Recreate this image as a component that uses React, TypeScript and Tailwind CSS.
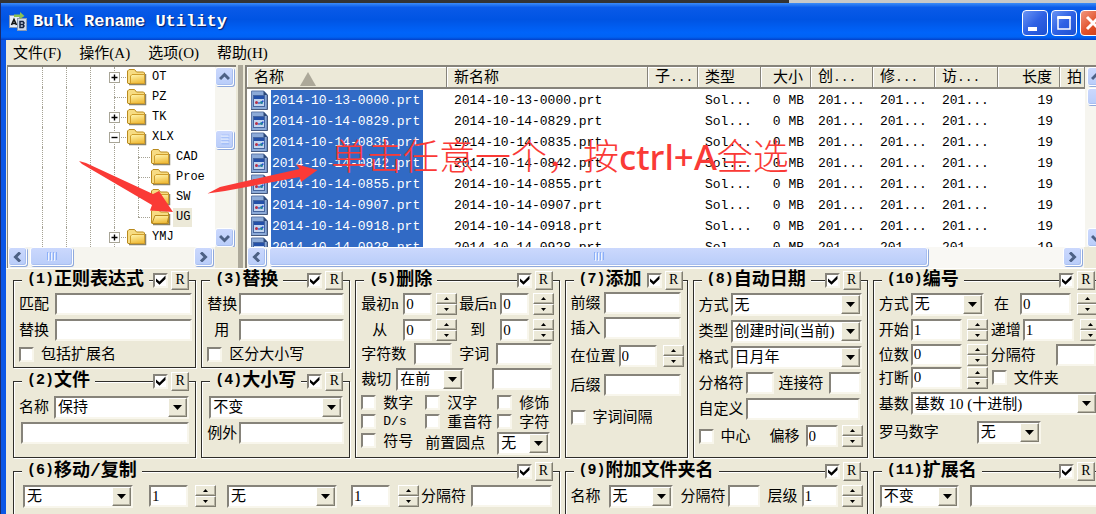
import type { ReactNode } from 'react';

const sunken =
  'h-[22px] min-w-0 rounded-none border-2 border-t-[#86837a] border-l-[#86837a] border-r-[#f8f6ec] border-b-[#f8f6ec] bg-white text-[15px] text-black outline-none';

const raised =
  'bg-[#ece9d8] border border-t-white border-l-white border-r-[#807d70] border-b-[#807d70] shadow-[inset_-1px_-1px_0_#b5b2a2]';

function Text({ label, w = 'w-[38px]' }: { label: string; w?: string }) {
  return (
    <input type="text" aria-label={label} className={`${sunken} ${w}`} />
  );
}

function Num({ label, value, w }: { label: string; value: string; w: string }) {
  return <input type="text" aria-label={label} defaultValue={value} className={`${sunken} ${w} shrink-0 pl-px`} />;
}

function Spin() {
  return (
    <span className="flex h-[22px] w-[21px] shrink-0 flex-col">
      <button type="button" aria-label="增加" className={`${raised} flex flex-1 items-center justify-center`}>
        <svg width="5" height="3" viewBox="0 0 5 3"><path d="M2.500 0L5 3H0z" /></svg>
      </button>
      <button type="button" aria-label="减少" className={`${raised} flex flex-1 items-center justify-center`}>
        <svg width="5" height="3" viewBox="0 0 5 3"><path d="M0 0H5L2.500 3z" /></svg>
      </button>
    </span>
  );
}

function Pick({ label, value, w }: { label: string; value: string; w: string }) {
  return (
    <span className={`relative block h-[23px] ${w}`}>
      <select
        aria-label={label}
        className="h-full w-full appearance-none rounded-none border-2 border-t-[#86837a] border-l-[#86837a] border-r-[#f8f6ec] border-b-[#f8f6ec] bg-white pr-[20px] pl-[2px] text-[15px] leading-[18px] text-black outline-none"
      >
        <option>{value}</option>
      </select>
      <span className={`${raised} pointer-events-none absolute top-[2px] right-[2px] bottom-[2px] flex w-[19px] items-center justify-center`}>
        <svg width="9" height="5" viewBox="0 0 9 5"><path d="M0 0H9L4.500 5z" /></svg>
      </span>
    </span>
  );
}

function Tick({ label, on }: { label: string; on?: boolean }) {
  return (
    <span className="relative block h-[15px] w-[15px] shrink-0">
      <input
        type="checkbox"
        aria-label={label}
        defaultChecked={on}
        className="block h-full w-full appearance-none border-2 border-t-[#86837a] border-l-[#86837a] border-r-[#f8f6ec] border-b-[#f8f6ec] bg-white"
      />
      {on && (
        <svg className="pointer-events-none absolute top-[2px] left-[3px]" width="10" height="10" viewBox="0 0 10 10">
          <path d="M0 3.500L3.500 6.500L9.500 0.500V4L3.500 9.800L0 6.500z" />
        </svg>
      )}
    </span>
  );
}

function Check({ label, mono, w = '' }: { label: string; mono?: boolean; w?: string }) {
  return (
    <label className={`flex shrink-0 items-center gap-[7px] ${w}`}>
      <Tick label={label} />
      <span className={mono ? "font-['Liberation_Mono'] text-[13px]" : ''}>{label}</span>
    </label>
  );
}

function Label({ children, w = 'w-[32px]' }: { children: ReactNode; w?: string }) {
  return <span className={`shrink-0 ${w}`}>{children}</span>;
}

function Row({ children, h = 'h-[26px]' }: { children: ReactNode; h?: string }) {
  return <div className={`flex items-center ${h}`}>{children}</div>;
}

function Group({ no, title, className = '', children }: { no: number; title: string; className?: string; children: ReactNode }) {
  return (
    <section className={`min-w-0 border border-[#2f2e2a] pr-[3px] pl-[5px] whitespace-nowrap shadow-[1px_1px_0_#fff,inset_1px_1px_0_#fff] ${className}`}>
      <div className="-mt-[11px] mb-px flex h-[20px] items-center pr-[3px] pl-[3px]">
        <h2 className="flex items-center bg-[#ece9d8] px-[5px] font-['Liberation_Mono','Noto_Sans_CJK_SC',monospace] text-[18px] leading-5 font-bold">
          <span className="text-[15px]">({no})</span>
          {title}
        </h2>
        <div className="ml-auto flex items-center gap-[3px] bg-[#ece9d8]">
          <Tick label={title} on />
          <button type="button" className={`${raised} h-[19px] w-[18px] text-[14px] leading-none`}>R</button>
        </div>
      </div>
      {children}
    </section>
  );
}

const chevrons = {
  up: 'M1 7L5.500 2.500L10 7',
  down: 'M1 3L5.500 7.500L10 3',
  left: 'M8 0.500L3.500 5L8 9.500',
  right: 'M3 0.500L7.500 5L3 9.500',
};

const thumb =
  'rounded-[3px] border border-white bg-linear-to-b from-[#cbd8fd] to-[#b9cdf9] shadow-[1px_1px_0_#8fa9dc,inset_-1px_-1px_0_#a9bff0]';

function ScrollButton({ dir }: { dir: keyof typeof chevrons }) {
  return (
    <button type="button" aria-label={dir} className={`${thumb} flex h-[19px] w-[19px] shrink-0 items-center justify-center`}>
      <svg width="11" height="10" viewBox="0 0 11 10" fill="none" stroke="#4d6185" strokeWidth="3">
        <path d={chevrons[dir]} />
      </svg>
    </button>
  );
}

function Grip({ vertical }: { vertical?: boolean }) {
  return (
    <svg width="10" height="9" viewBox="0 0 10 9" stroke="#8cb0f8" className={vertical ? 'rotate-90' : ''}>
      <path d="M0.500 0V8M3.500 0V8M6.500 0V8M9.500 0V8" />
      <path d="M1.500 1V9M4.500 1V9M7.500 1V9" stroke="#eef4fe" />
    </svg>
  );
}

function Folder({ open }: { open?: boolean }) {
  return (
    <svg width="21" height="18" viewBox="0 0 21 18" className="shrink-0">
      <defs>
        <linearGradient id="folder" x1="0" y1="0" x2="0.300" y2="1">
          <stop offset="0" stopColor="#fff7b5" />
          <stop offset="1" stopColor="#f0bd3c" />
        </linearGradient>
      </defs>
      <path d="M3 16.500H19.500V6" fill="none" stroke="#8b8368" strokeWidth="1.500" />
      <path d="M1.500 15V3L3 1.500H8.500L10.500 4H17.500L18.500 5V15.500H2z" fill="#f7dc83" stroke="#b98a1e" />
      {open ? (
        <path d="M2 15.500L5 7.500H19L17 15.500z" fill="url(#folder)" stroke="#b98a1e" />
      ) : (
        <path d="M4.500 15.500V8L6 6.500H18.500V15.500z" fill="url(#folder)" stroke="#d09d2b" />
      )}
    </svg>
  );
}

function PartIcon() {
  return (
    <svg width="19" height="21" viewBox="0 0 19 21" className="shrink-0">
      <path d="M1.500 1H13.500L17 4.500V19.500H1.500z" fill="#8caad8" stroke="#5f79a8" />
      <path d="M13.500 0.500V5H17.500z" fill="#2f4a78" />
      <path d="M1 19.500H17.500V5" fill="none" stroke="#46587c" />
      <rect x="3.500" y="5.500" width="11" height="11" fill="#c3d4ee" stroke="#4565a0" />
      <rect x="4" y="6" width="10" height="3" fill="#2450a8" />
      <circle cx="6.500" cy="12.500" r="1.500" fill="#b8304a" />
      <circle cx="9" cy="13" r="1" fill="#3b6bd0" />
      <circle cx="11.500" cy="12.500" r="1.500" fill="#1f7d9c" />
      <path d="M12 10.500H13.500V12H12z" fill="#2347d8" />
    </svg>
  );
}

type Node = { name: string; depth: number; box?: '+' | '-'; open?: boolean };

const tree: Node[] = [
  { name: 'OT', depth: 0, box: '+' },
  { name: 'PZ', depth: 0 },
  { name: 'TK', depth: 0, box: '+' },
  { name: 'XLX', depth: 0, box: '-' },
  { name: 'CAD', depth: 1 },
  { name: 'Proe', depth: 1 },
  { name: 'SW', depth: 1 },
  { name: 'UG', depth: 1, open: true },
  { name: 'YMJ', depth: 0, box: '+' },
];

function Rail() {
  return (
    <span className="flex w-[24px] shrink-0 justify-center self-stretch">
      <span className="h-full border-l border-dotted border-[#a5a294]" />
    </span>
  );
}

function TreeRow({ node }: { node: Node }) {
  return (
    <li className="flex h-[20px] items-center">
      <Rail />
      <Rail />
      <Rail />
      {node.depth === 1 && <Rail />}
      <span className="relative flex w-[24px] shrink-0 justify-center self-stretch">
        <span className={`border-l border-dotted border-[#a5a294] ${node.open ? 'h-1/2' : 'h-full'}`} />
        <span className="absolute top-1/2 right-0 left-1/2 border-t border-dotted border-[#a5a294]" />
        {node.box && (
          <svg className="absolute top-[5px] left-[7px]" width="11" height="11" viewBox="0 0 11 11">
            <rect x="0.500" y="0.500" width="10" height="10" fill="#fff" stroke="#a8a597" />
            <path d={node.box === '+' ? 'M2.500 5.500H8.500M5.500 2.500V8.500' : 'M2.500 5.500H8.500'} stroke="#000" strokeWidth="1.400" />
          </svg>
        )}
      </span>
      <Folder open={node.open} />
      <span className={`ml-[2px] pr-[2px] pl-[3px] leading-[19px] ${node.open ? 'bg-[#ece9d8]' : ''}`}>{node.name}</span>
    </li>
  );
}

function FolderTree() {
  return (
    <div className="flex w-[229px] shrink-0 flex-col border-t-2 border-l border-[#86837a] bg-white">
      <div className="flex min-h-0 flex-1 overflow-hidden">
        <ul className="min-w-0 flex-1 overflow-hidden pl-[22px] font-['Liberation_Mono'] text-[12px]">
          {tree.map((node) => (
            <TreeRow key={node.name} node={node} />
          ))}
        </ul>
        <div className="flex w-[21px] flex-col bg-[#f6f5ef]">
          <ScrollButton dir="up" />
          <div className="flex-1 pt-[44px]">
            <div className={`${thumb} flex h-[19px] w-[19px] items-center justify-center`}><Grip vertical /></div>
          </div>
          <ScrollButton dir="down" />
        </div>
      </div>
      <div className="flex h-[21px] bg-[#f6f5ef]">
        <ScrollButton dir="left" />
        <div className="flex-1 pl-[3px]">
          <div className={`${thumb} flex h-[19px] w-[43px] items-center justify-center`}><Grip /></div>
        </div>
        <ScrollButton dir="right" />
        <div className="ml-[2px] w-[21px] bg-[#ece9d8]" />
      </div>
    </div>
  );
}

const columns = [
  { title: '名称', cut: false, right: false, sorted: true },
  { title: '新名称', cut: false, right: false },
  { title: '子', cut: true, right: false },
  { title: '类型', cut: false, right: false },
  { title: '大小', cut: false, right: true },
  { title: '创', cut: true, right: false },
  { title: '修', cut: true, right: false },
  { title: '访', cut: true, right: false },
  { title: '长度', cut: false, right: true },
  { title: '拍', cut: false, right: false },
];

const files = [
  '2014-10-13-0000.prt',
  '2014-10-14-0829.prt',
  '2014-10-14-0835.prt',
  '2014-10-14-0842.prt',
  '2014-10-14-0855.prt',
  '2014-10-14-0907.prt',
  '2014-10-14-0918.prt',
  '2014-10-14-0928.prt',
];

function FileList() {
  return (
    <div className="flex min-w-0 flex-1 flex-col border-t-2 border-l-2 border-[#86837a] bg-white">
      <div className="flex min-h-0 flex-1">
        <div className="min-w-0 flex-1 overflow-hidden">
          <table className="w-full table-fixed border-separate border-spacing-0 whitespace-nowrap">
            <colgroup>
              <col className="w-[200px]" />
              <col className="w-[201px]" />
              <col className="w-[50px]" />
              <col className="w-[63px]" />
              <col className="w-[50px]" />
              <col className="w-[62px]" />
              <col className="w-[62px]" />
              <col className="w-[63px]" />
              <col className="w-[62px]" />
              <col />
            </colgroup>
            <thead>
              <tr className="h-[20px] text-[15px] leading-[18px]">
                {columns.map((col) => (
                  <th
                    key={col.title}
                    className={`overflow-hidden border-r border-b-2 border-r-[#86837a] border-b-[#86837a] bg-[#ece9d8] px-[7px] py-0 font-normal shadow-[inset_1px_1px_0_#fff] ${col.right ? 'text-right' : 'text-left'}`}
                  >
                    {col.title}
                    {col.cut && <span className="font-['Liberation_Mono'] text-[13px]">...</span>}
                    {col.sorted && (
                      <svg className="ml-[16px] inline-block" width="16" height="14" viewBox="0 0 16 14">
                        <path d="M8 0L16 14H0z" fill="#aca899" />
                      </svg>
                    )}
                  </th>
                ))}
              </tr>
            </thead>
            <tbody className="font-['Liberation_Mono'] text-[13px] leading-[21px]">
              <tr className="h-px" />
              {files.map((name) => (
                <tr key={name} className="h-[21px]">
                  <td className="p-0">
                    <span className="flex h-[21px] gap-[2px] pl-[3px]">
                      <PartIcon />
                      <span className="w-[152px] bg-[#316ac5] pl-px text-white">{name}</span>
                    </span>
                  </td>
                  <td className="px-[7px] py-0">{name}</td>
                  <td />
                  <td className="px-[7px] py-0">Sol...</td>
                  <td className="px-[7px] py-0 text-right">0 MB</td>
                  <td className="px-[7px] py-0">201...</td>
                  <td className="px-[7px] py-0">201...</td>
                  <td className="px-[7px] py-0">201...</td>
                  <td className="px-[7px] py-0 text-right">19</td>
                  <td />
                </tr>
              ))}
            </tbody>
          </table>
        </div>
        <div className="flex w-[22px] shrink-0 flex-col bg-[#f6f5ef] pl-[2px]">
          <ScrollButton dir="up" />
          <div className="flex-1 pt-[2px]">
            <div className={`${thumb} h-[17px] w-[19px]`} />
          </div>
          <ScrollButton dir="down" />
        </div>
      </div>
      <div className="flex h-[21px] bg-[#f9f8f4]">
        <ScrollButton dir="left" />
        <div className="flex-1 pl-[3px]">
          <div className={`${thumb} flex h-[19px] w-[83%] items-center justify-center`}><Grip /></div>
        </div>
        <ScrollButton dir="right" />
        <div className="ml-[2px] w-[23px] bg-[#ece9d8]" />
      </div>
    </div>
  );
}

function TitleBar() {
  return (
    <header className="flex h-[37px] items-center bg-[linear-gradient(#3c8cf8_0,#0a5ae8_12%,#0054e3_45%,#0064fa_80%,#0062f4_92%,#0340c8)] pr-[6px] pl-[8px]">
      <svg width="18" height="19" viewBox="0 0 18 19">
        <rect x="0.500" y="3.500" width="10" height="12" fill="#e6ecf6" stroke="#8b9ab4" />
        <rect x="8.500" y="6.500" width="9" height="12" fill="#cfd9ea" stroke="#8b9ab4" />
        <path d="M5 2.500H11V0L15.500 4L11 7V5H5z" fill="#8cc152" />
        <path d="M2.500 13L5 7.500L7.500 13M3.500 11.500H6.500" fill="none" stroke="#111" strokeWidth="1.600" />
        <path d="M11 9.500H14L15 11L14 12.500L15 14L14 15.500H11zM11 12.500H14" fill="none" stroke="#15233f" strokeWidth="1.500" />
      </svg>
      <h1 className="ml-[6px] pt-px font-['Liberation_Mono'] text-[17px] font-bold text-white [text-shadow:1px_1px_1px_#0a1f6b]">Bulk Rename Utility</h1>
      <div className="ml-auto flex gap-[3px] pt-[3px]">
        <button type="button" aria-label="最小化" className="h-[26px] w-[26px] rounded-[4px] border border-white bg-linear-to-br from-[#6a93f4] via-[#2f61e4] to-[#1c50d2]">
          <svg width="24" height="24" viewBox="0 0 24 24"><rect x="5" y="16" width="9" height="4" fill="#fff" /></svg>
        </button>
        <button type="button" aria-label="最大化" className="h-[26px] w-[26px] rounded-[4px] border border-white bg-linear-to-br from-[#6a93f4] via-[#2f61e4] to-[#1c50d2]">
          <svg width="24" height="24" viewBox="0 0 24 24"><path d="M6 6.500H18V18H6z" fill="none" stroke="#fff" strokeWidth="1.500" /><path d="M5.300 6.500H18.700" stroke="#fff" strokeWidth="3" /></svg>
        </button>
        <button type="button" aria-label="关闭" className="h-[26px] w-[26px] rounded-[4px] border border-white bg-linear-to-br from-[#f0967c] via-[#e2522b] to-[#c53a12]">
          <svg width="24" height="24" viewBox="0 0 24 24"><path d="M6 6L18 18M18 6L6 18" stroke="#fff" strokeWidth="3" /></svg>
        </button>
      </div>
    </header>
  );
}

function Options() {
  return (
    <main className="grid grid-cols-[minmax(0,183fr)_minmax(0,149fr)_minmax(0,204fr)_minmax(0,123fr)_minmax(0,175fr)_minmax(0,229fr)] gap-x-[5px] gap-y-[13px] border-t border-white pt-[11px] pr-[5px] pl-[7px] text-[15px] leading-[18px]">
      <div className="flex flex-col gap-[13px]">
        <Group no={1} title="正则表达式" className="h-[88px]">
          <Row><Label w="w-[36px]">匹配</Label><Text label="匹配" w="flex-1" /></Row>
          <Row><Label w="w-[36px]">替换</Label><Text label="替换" w="flex-1" /></Row>
          <Row h="h-[22px]"><Check label="包括扩展名" /></Row>
        </Group>
        <Group no={2} title="文件" className="h-[77px]">
          <Row h="h-[30px]"><Label w="w-[35px]">名称</Label><Pick label="名称" value="保持" w="flex-1 mr-[3px]" /></Row>
          <Row h="h-[22px]"><Text label="文件名" w="ml-[2px] mr-[3px] flex-1" /></Row>
        </Group>
      </div>

      <div className="flex flex-col gap-[13px]">
        <Group no={3} title="替换" className="h-[88px]">
          <Row><Label>替换</Label><Text label="替换文字" w="flex-1 mr-[2px]" /></Row>
          <Row><Label w="w-[32px] pl-[7px]">用</Label><Text label="用" w="flex-1 mr-[2px]" /></Row>
          <Row h="h-[22px]"><Check label="区分大小写" /></Row>
        </Group>
        <Group no={4} title="大小写" className="h-[77px]">
          <Row h="h-[30px]"><Pick label="大小写" value="不变" w="flex-1 ml-[2px] mr-[3px]" /></Row>
          <Row h="h-[22px]"><Label>例外</Label><Text label="例外" w="flex-1 mr-[2px]" /></Row>
        </Group>
      </div>

      <Group no={5} title="删除" className="h-[178px]">
        <Row><Label w="w-[42px]">最初n</Label><Num label="最初n" value="0" w="w-[29px] mr-[4px]" /><Spin /><Label w="w-[41px] ml-[2px]">最后n</Label><Num label="最后n" value="0" w="w-[29px] mr-[4px]" /><Spin /></Row>
        <Row><Label w="w-[42px] pl-[11px]">从</Label><Num label="从" value="0" w="w-[29px] mr-[4px]" /><Spin /><Label w="w-[41px] ml-[2px] pl-[11px]">到</Label><Num label="到" value="0" w="w-[29px] mr-[4px]" /><Spin /></Row>
        <Row h="h-[22px]"><Label w="w-[53px]">字符数</Label><Text label="字符数" w="w-[38px]" /><Label w="w-[37px] ml-[7px]">字词</Label><Text label="字词" w="w-[56px]" /></Row>
        <Row h="h-[28px]"><Label w="w-[35px]">裁切</Label><Pick label="裁切" value="在前" w="w-[68px]" /><Text label="裁切文字" w="w-[60px] ml-[28px]" /></Row>
        <div className="flex">
          <div className="flex flex-col">
            <Row h="h-[19px]"><Check label="数字" w="w-[64px]" /></Row>
            <Row h="h-[19px]"><Check label="D/s" mono w="w-[64px]" /></Row>
            <Row h="h-[19px]"><Check label="符号" w="w-[64px]" /></Row>
          </div>
          <div className="flex flex-col">
            <Row h="h-[19px]"><Check label="汉字" w="w-[72px]" /><Check label="修饰" /></Row>
            <Row h="h-[19px]"><Check label="重音符" w="w-[72px]" /><Check label="字符" /></Row>
            <Row h="h-[24px]"><Label w="w-[72px]">前置圆点</Label><Pick label="前置圆点" value="无" w="w-[53px]" /></Row>
          </div>
        </div>
      </Group>

      <Group no={7} title="添加" className="h-[178px]">
        <Row h="h-[24px]"><Label w="w-[33px]">前缀</Label><Text label="前缀" w="w-[77px]" /></Row>
        <Row h="h-[26px]"><Label w="w-[33px]">插入</Label><Text label="插入" w="w-[77px]" /></Row>
        <Row h="h-[30px]"><Label w="w-[48px]">在位置</Label><Num label="在位置" value="0" w="w-[38px] mr-[6px]" /><Spin /></Row>
        <Row h="h-[28px]"><Label w="w-[33px]">后缀</Label><Text label="后缀" w="w-[77px]" /></Row>
        <Row h="h-[36px]"><Check label="字词间隔" /></Row>
      </Group>

      <Group no={8} title="自动日期" className="h-[178px]">
        <Row h="h-[27px]"><Label>方式</Label><Pick label="方式" value="无" w="flex-1 mr-[2px]" /></Row>
        <Row h="h-[26px]"><Label>类型</Label><Pick label="类型" value="创建时间(当前)" w="flex-1 mr-[2px]" /></Row>
        <Row h="h-[26px]"><Label>格式</Label><Pick label="格式" value="日月年" w="flex-1 mr-[2px]" /></Row>
        <Row h="h-[26px]"><Label w="w-[47px]">分格符</Label><Text label="分格符" w="w-[28px]" /><Label w="w-[50px] ml-[5px]">连接符</Label><Text label="连接符" w="w-[32px]" /></Row>
        <Row h="h-[26px]"><Label w="w-[47px]">自定义</Label><Text label="自定义" w="flex-1 mr-[4px]" /></Row>
        <Row h="h-[28px]"><Check label="中心" w="w-[71px]" /><Label w="w-[36px]">偏移</Label><Num label="偏移" value="0" w="w-[32px] mr-[4px]" /><Spin /></Row>
      </Group>

      <Group no={10} title="编号" className="h-[178px]">
        <Row><Label>方式</Label><Pick label="编号方式" value="无" w="w-[76px] mr-[10px]" /><Label w="w-[26px]">在</Label><Num label="在" value="0" w="w-[51px] mr-[6px]" /><Spin /></Row>
        <Row><Label>开始</Label><Num label="开始" value="1" w="w-[51px] mr-[5px]" /><Spin /><Label w="w-[32px] ml-[3px]">递增</Label><Num label="递增" value="1" w="w-[51px] mr-[6px]" /><Spin /></Row>
        <Row h="h-[23px]"><Label>位数</Label><Num label="位数" value="0" w="w-[51px] mr-[5px]" /><Spin /><Label w="w-[65px] ml-[3px]">分隔符</Label><Text label="编号分隔符" w="w-[40px]" /></Row>
        <Row h="h-[23px]"><Label>打断</Label><Num label="打断" value="0" w="w-[51px] mr-[5px]" /><Spin /><Check label="文件夹" w="ml-[4px]" /></Row>
        <Row h="h-[29px]"><Label>基数</Label><Pick label="基数" value="基数 10 (十进制)" w="flex-1" /></Row>
        <Row h="h-[28px]"><Label w="w-[98px]">罗马数字</Label><Pick label="罗马数字" value="无" w="w-[64px]" /></Row>
      </Group>

      <Group no={6} title="移动/复制" className="col-span-3 h-[50px]">
        <Row h="h-[28px]">
          <Pick label="移动" value="无" w="w-[110px] ml-[4px] mr-[16px]" />
          <Num label="移动数" value="1" w="w-[39px] mr-[7px]" /><Spin />
          <Pick label="复制" value="无" w="w-[110px] ml-[11px] mr-[14px]" />
          <Num label="复制数" value="1" w="w-[39px] mr-[8px]" /><Spin />
          <Label w="w-[50px] ml-[2px]">分隔符</Label><Text label="移动分隔符" w="flex-1 mr-[4px]" />
        </Row>
      </Group>

      <Group no={9} title="附加文件夹名" className="col-span-2 h-[50px]">
        <Row h="h-[28px]">
          <Label w="w-[38px]">名称</Label><Pick label="文件夹名称" value="无" w="w-[64px] mr-[8px]" />
          <Label w="w-[47px]">分隔符</Label><Text label="文件夹分隔符" w="w-[32px]" />
          <Label w="w-[34px] ml-[8px]">层级</Label><Num label="层级" value="1" w="w-[36px] mr-[4px]" /><Spin />
        </Row>
      </Group>

      <Group no={11} title="扩展名" className="h-[50px]">
        <Row h="h-[28px]"><Pick label="扩展名" value="不变" w="w-[79px] ml-px mr-[11px]" /><Text label="新扩展名" w="flex-1" /></Row>
      </Group>
    </main>
  );
}

export default function App() {
  return (
    <div className="h-screen overflow-hidden bg-linear-to-r from-[#333] from-72% to-[#c8c8c8] to-72% pt-[3px] font-['Liberation_Serif','Noto_Sans_CJK_SC',serif] text-black">
      <div className="relative -mr-4 min-h-full border-l border-[#1a2a6c] bg-[#0a56e6]">
        <TitleBar />
        <div className="mx-[5px] bg-[#ece9d8]">
          <nav className="flex h-[25px] items-center gap-[18px] pl-[7px] text-[15px] leading-[18px]">
            {['文件(F)', '操作(A)', '选项(O)', '帮助(H)'].map((item) => (
              <button key={item} type="button">{item}</button>
            ))}
          </nav>
          <div className="flex h-[203px] gap-[2px] pl-px">
            <FolderTree />
            <div className="w-[5px] bg-[#aca899]" />
            <FileList />
          </div>
          <Options />
        </div>

        {/* Annotation drawn over the window */}
        <svg className="pointer-events-none absolute top-[147px] left-[69px]" width="260" height="80" viewBox="70 150 260 80" fill="#fa3a36">
          <path d="M79 161L86 163L153 194L159 191L173 212L150 210.500L152 205L82 164z" />
          <path d="M207.500 193.500L220 187L299.500 169L296 164L317.500 170L301 182L299.500 177L225 191z" />
        </svg>
        <p className="pointer-events-none absolute top-[127px] left-[330px] font-['Noto_Sans','Noto_Sans_CJK_SC',sans-serif] text-[36px] leading-[54px] whitespace-nowrap text-[#fa3a36]">
          <span className="font-light">单击任意一个，按</span>
          <span className="text-[35px] font-medium">ctrl+A</span>
          <span className="font-light">全选</span>
        </p>
      </div>
    </div>
  );
}
